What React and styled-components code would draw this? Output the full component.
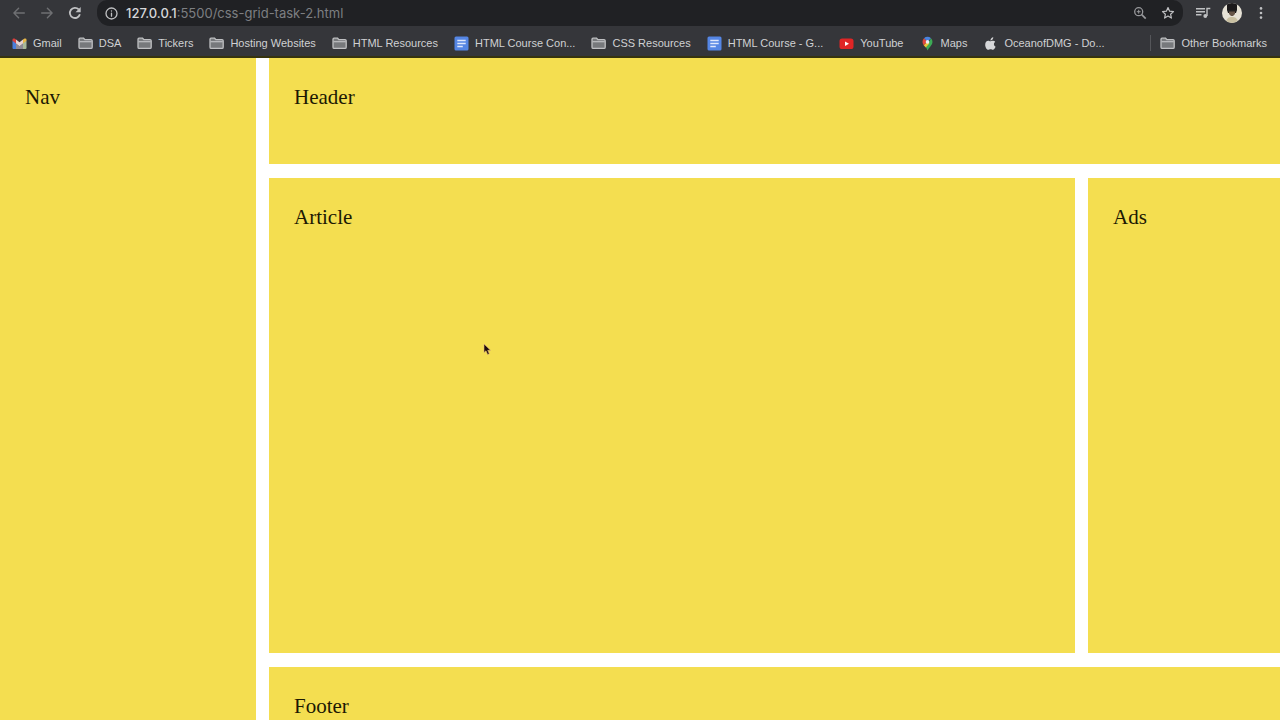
import React from "react";
import styled, { createGlobalStyle, css } from "styled-components";

const GlobalStyle = createGlobalStyle`
  * { box-sizing: border-box; }
  html, body { margin: 0; background: #fff; }
`;

const Browser = styled.div`
  height: 100vh;
  display: flex;
  flex-direction: column;
  overflow: hidden;
`;

const addressFont = css`
  font-family: Inter, "Liberation Sans", sans-serif;
  font-size: 13px;
`;

const Chrome = styled.header`
  flex: none;
  background: #35363a;
  color: #d0d1d3;
  border-bottom: 2px solid #36330f;
`;

const Toolbar = styled.div`
  display: flex;
  align-items: center;
  height: 26px;
  padding-left: 11px;
`;

const IconButton = styled.button`
  display: flex;
  align-items: center;
  justify-content: center;
  flex: none;
  width: ${(p) => p.$width || 28}px;
  height: 26px;
  padding: 0;
  border: 0;
  background: none;
  color: ${(p) => (p.$dim ? "#6f7073" : "#c0c1c3")};
`;

const NavButtons = styled.div`
  display: flex;
  gap: 12px;
  margin-right: 14px;
`;

const AddressBar = styled.div`
  flex: 1;
  display: flex;
  align-items: center;
  height: 26px;
  padding: 0 1px 0 8px;
  border-radius: 10px 10px 13px 13px;
  background: #202124;
`;

const Address = styled.label`
  ${addressFont}
  flex: 1;
  display: flex;
  align-items: center;
  margin-left: 8px;
`;

const Host = styled.span`
  color: #d6d7d9;
  font-weight: 500;
`;

const Path = styled.input`
  ${addressFont}
  flex: 1;
  min-width: 0;
  padding: 0;
  border: 0;
  outline: 0;
  background: none;
  color: #7d7f82;
`;

const Avatar = styled.svg`
  display: block;
  border-radius: 50%;
`;

const BookmarkBar = styled.nav`
  display: flex;
  align-items: center;
  gap: 16px;
  height: 30px;
  padding: 4px 13px 0 12px;
`;

const Bookmark = styled.a`
  display: flex;
  align-items: center;
  gap: 6px;
  flex: none;
  color: inherit;
  font-family: "Liberation Sans", Arial, sans-serif;
  font-size: 11px;
  line-height: 16px;
  text-decoration: none;
  white-space: nowrap;
`;

const OtherBookmarks = styled.div`
  display: flex;
  margin-left: auto;
  padding-left: 9px;
  border-left: 1px solid #55565a;
`;

const Page = styled.main`
  flex: 1;
  min-height: 0;
  display: grid;
  grid-template-columns: 256fr 806fr 192fr;
  grid-template-rows: 106px 475px 1fr;
  grid-template-areas:
    "nav header header"
    "nav article ads"
    "nav footer footer";
  gap: 14px 13px;
  cursor: default;
`;

const Panel = styled.section`
  grid-area: ${(p) => p.$area};
  position: relative;
  min-width: 0;
  padding: 26px 25px 0;
  background: #f4de50;
  color: #1c1903;
  font-family: "Liberation Serif", "Times New Roman", serif;
  font-size: 21px;
  line-height: 26px;
`;

const Pointer = styled.svg`
  position: absolute;
  left: 214px;
  top: 165px;
`;

const stroke = { fill: "none", stroke: "currentColor", strokeLinecap: "round", strokeLinejoin: "round" };

const BackIcon = () => (
  <svg width="14" height="14" viewBox="0 0 14 14" {...stroke} strokeWidth="1.4">
    <path d="M12.3 7H2M6.6 2.3 1.9 7l4.7 4.7" />
  </svg>
);
const ForwardIcon = () => (
  <svg width="14" height="14" viewBox="0 0 14 14" {...stroke} strokeWidth="1.4">
    <path d="M1.7 7H12M7.4 2.3 12.1 7l-4.7 4.7" />
  </svg>
);
const ReloadIcon = () => (
  <svg width="14" height="14" viewBox="0 0 14 14">
    <path d="M11.9 8.3A5.1 5.1 0 1 1 10.7 3.4" fill="none" stroke="currentColor" strokeWidth="1.8" />
    <path d="M12.7 1v5.2H7.5z" fill="currentColor" />
  </svg>
);
const InfoIcon = () => (
  <svg width="13" height="13" viewBox="0 0 13 13" {...stroke} strokeWidth="1.3">
    <circle cx="6.5" cy="6.5" r="5.5" />
    <path d="M6.5 6.2v3M6.5 3.8v.2" />
  </svg>
);
const ZoomIcon = () => (
  <svg width="14" height="14" viewBox="0 0 14 14" fill="none" stroke="#98999c">
    <circle cx="5.7" cy="5.7" r="4" strokeWidth="1.3" />
    <path d="m8.700 8.700 4 4" strokeWidth="1.7" />
    <path d="M3.800 5.700h3.800M5.700 3.800v3.800" strokeWidth="1" />
  </svg>
);
const StarIcon = () => (
  <svg width="14" height="14" viewBox="0 0 14 14" {...stroke} strokeWidth="1.2">
    <path d="m7 1.6 1.6 3.6 3.9.4-2.9 2.6.8 3.9L7 10.1l-3.4 2 .8-3.9-2.9-2.6 3.9-.4z" />
  </svg>
);
const MediaIcon = () => (
  <svg width="16" height="14" viewBox="0 0 16 14" fill="none" stroke="currentColor" strokeWidth="1.4">
    <path d="M1 2.7h9M1 5.7h9M1 8.7h5.500M12 10V2.500h3.300" />
    <circle cx="10.3" cy="10" r="1.9" fill="currentColor" stroke="none" />
  </svg>
);
const MenuIcon = () => (
  <svg width="4" height="14" viewBox="0 0 4 14" fill="currentColor">
    <circle cx="2" cy="2.400" r="1.300" />
    <circle cx="2" cy="7" r="1.300" />
    <circle cx="2" cy="11.600" r="1.300" />
  </svg>
);
const ProfileIcon = () => (
  <Avatar width="20" height="20" viewBox="0 0 20 20">
    <rect width="20" height="20" fill="#e6e2d6" />
    <path d="M5 0h10v7l-1 3H6L5 7z" fill="#1c1a1b" />
    <path d="M7 7h6v4l-2 2H9l-2-2z" fill="#665548" />
    <path d="M6 7h8v1.500H6z" fill="#222" />
    <path d="M4 20c0-5 3-6 6-6s6 1 6 6z" fill="#c9c0a2" />
  </Avatar>
);

const FolderIcon = () => (
  <svg width="15" height="15" viewBox="0 0 15 15" aria-hidden="true">
    <path d="M1 3.200q0-1 1-1h3.600l1.300 1.400H13q1.200 0 1.200 1.200v6.400q0 1.200-1.200 1.200H2.200Q1 12.400 1 11.200z" fill="#77797c" stroke="#bfc0c2" strokeWidth="1.3" />
    <path d="M1.500 5.700h12.200" stroke="#bfc0c2" strokeWidth="1.2" />
  </svg>
);
const GmailIcon = () => (
  <svg width="15" height="15" viewBox="0 0 15 15" aria-hidden="true">
    <path d="M.5 4.500v7.500q0 1 1 1H4V6.500z" fill="#4a7fdc" />
    <path d="M4 7.600 7.500 10.200 11 7.600V13H4z" fill="#8f8b95" />
    <path d="M11 6.500V13h2.500q1 0 1-1V4.500z" fill="#a9b99a" />
    <path d="M4 3.600 7.500 6.300 11 3.600V7.600L7.500 10.200 4 7.600z" fill="#e6d3d2" />
    <path d="M.5 4.700V3.800q0-1.800 2-1.300L4 3.600v4z" fill="#d93f3d" />
    <path d="M14.500 4.700V3.800q0-1.800-2-1.300L11 3.600v4z" fill="#e8b84a" />
  </svg>
);
const DocIcon = () => (
  <svg width="15" height="15" viewBox="0 0 15 15" aria-hidden="true">
    <rect x=".5" y=".5" width="14" height="14" rx="1.500" fill="#5586e4" />
    <path d="M3.300 4.500h8.400M3.300 7.500h8.400M3.300 10.500h5.500" stroke="#dfe8fc" strokeWidth="1.5" />
  </svg>
);
const YouTubeIcon = () => (
  <svg width="15" height="15" viewBox="0 0 15 15" aria-hidden="true">
    <rect x=".5" y="2.500" width="14" height="10.500" rx="2.600" fill="#df2525" />
    <path d="m6 5.400 4 2.300-4 2.300z" fill="#fff" />
  </svg>
);
const MapsIcon = () => (
  <svg width="15" height="15" viewBox="0 0 15 15" aria-hidden="true">
    <path d="M2.500 6A5 5 0 0 1 4 2.300l3.500 3.500-3.800 3.500Q2.500 7.600 2.500 6z" fill="#e0493e" />
    <path d="M4 2.300A5 5 0 0 1 11 2.300L7.500 5.800z" fill="#4a83dd" />
    <path d="M11 2.300A5 5 0 0 1 12.500 6q0 2.500-2.300 4.800Q8.500 12.500 7.500 14.500 7 12.700 5.800 11.200z" fill="#3caa55" />
    <path d="m3.700 9.300 3.800-3.500 1.800 1.800-3.500 3.800z" fill="#efc338" />
    <circle cx="7.500" cy="5.900" r="1.800" fill="#e8edf4" />
  </svg>
);
const AppleIcon = () => (
  <svg width="15" height="15" viewBox="0 0 15 15" fill="#d5d6d8" aria-hidden="true">
    <path d="M7.300 4.500c.5-2 1.300-3 3-3.300 0 1.800-1.200 3.200-3 3.300z" />
    <path d="M7.300 5.300c1-.2 1.600-.7 2.700-.6 1 .1 1.700.5 2.200 1.100-1.900 1.300-1.700 4 .4 5-.6 1.500-1.500 3-2.700 3-.9 0-1.200-.5-2.300-.5s-1.500.5-2.300.5C3.500 13.800 2.200 11 2.200 8.700c0-2.400 1.400-4 3.100-4 .9 0 1.400.5 2 .6z" />
  </svg>
);

const bookmarks = [
  ["Gmail", GmailIcon],
  ["DSA", FolderIcon],
  ["Tickers", FolderIcon],
  ["Hosting Websites", FolderIcon],
  ["HTML Resources", FolderIcon],
  ["HTML Course Con...", DocIcon],
  ["CSS Resources", FolderIcon],
  ["HTML Course - G...", DocIcon],
  ["YouTube", YouTubeIcon],
  ["Maps", MapsIcon],
  ["OceanofDMG - Do...", AppleIcon],
];

export default function App() {
  return (
    <Browser>
      <GlobalStyle />
      <Chrome>
        <Toolbar>
          <NavButtons>
            <IconButton $width={16} $dim aria-label="Back"><BackIcon /></IconButton>
            <IconButton $width={16} $dim aria-label="Forward"><ForwardIcon /></IconButton>
            <IconButton $width={16} aria-label="Reload"><ReloadIcon /></IconButton>
          </NavButtons>
          <AddressBar>
            <IconButton $width={13} aria-label="Site information"><InfoIcon /></IconButton>
            <Address>
              <Host>127.0.0.1</Host>
              <Path aria-label="Address" defaultValue=":5500/css-grid-task-2.html" />
            </Address>
            <IconButton aria-label="Zoom"><ZoomIcon /></IconButton>
            <IconButton aria-label="Bookmark this page"><StarIcon /></IconButton>
          </AddressBar>
          <IconButton $width={39} aria-label="Media controls"><MediaIcon /></IconButton>
          <IconButton $width={20} aria-label="Profile"><ProfileIcon /></IconButton>
          <IconButton $width={38} aria-label="Menu"><MenuIcon /></IconButton>
        </Toolbar>
        <BookmarkBar aria-label="Bookmarks">
          {bookmarks.map(([label, Icon]) => (
            <Bookmark href="#" key={label}>
              <Icon />
              {label}
            </Bookmark>
          ))}
          <OtherBookmarks>
            <Bookmark href="#">
              <FolderIcon />
              Other Bookmarks
            </Bookmark>
          </OtherBookmarks>
        </BookmarkBar>
      </Chrome>
      <Page>
        <Panel as="nav" $area="nav">Nav</Panel>
        <Panel as="header" $area="header">Header</Panel>
        <Panel as="article" $area="article">
          Article
          <Pointer width="8" height="13" viewBox="0 0 8 13" aria-hidden="true">
            <path d="M1 1v8.500l2-1.700 1.600 3.700 1.700-.8-1.600-3.400H7.500z" fill="#1d0b0b" stroke="#e2b77a" strokeWidth=".6" />
          </Pointer>
        </Panel>
        <Panel as="aside" $area="ads">Ads</Panel>
        <Panel as="footer" $area="footer">Footer</Panel>
      </Page>
    </Browser>
  );
}
